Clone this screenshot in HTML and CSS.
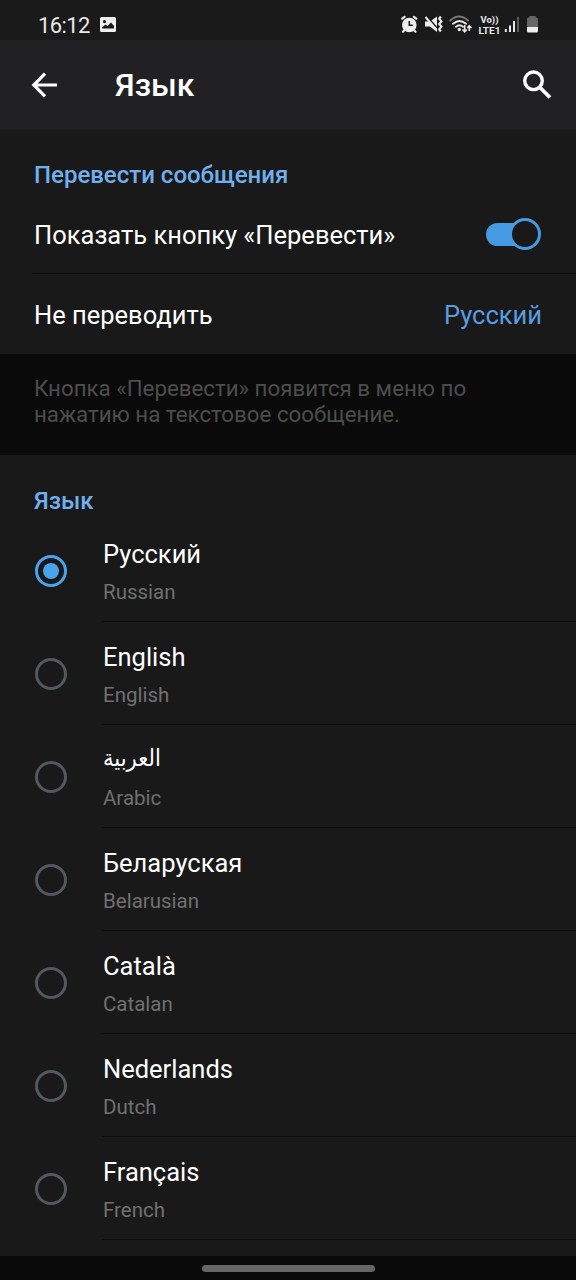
FILE: index.html
```html
<!DOCTYPE html>
<html lang="ru">
<head>
<meta charset="utf-8">
<title>Язык</title>
<link rel="stylesheet" href="styles.css">
</head>
<body>
<div class="screen">
  <div class="status">
    <span class="clock">16:12</span>
    <svg class="picture" width="16" height="16" viewBox="0 0 16 16"><path fill="#eee" fill-rule="evenodd" d="M1.500 0h13A1.500 1.500 0 0 1 16 1.500v12a1.500 1.500 0 0 1-1.500 1.500h-13A1.500 1.500 0 0 1 0 13.500v-12A1.500 1.500 0 0 1 1.500 0zM2 11.500h12V9l-3-3.500-3.500 3.500L5.500 7.500 2 10.500zM4.500 3a1.600 1.600 0 1 0 0 3.200 1.600 1.600 0 0 0 0-3.200z"/></svg>
    <svg class="indicators" width="140" height="26" viewBox="400 12 140 26">
      <path d="M402.200 18.700l2.400-1.900M416.300 18.700l-2.400-1.900M404.500 30l-1.500 1.700M414 30l1.500 1.700" fill="none" stroke="#e9e9e9" stroke-width="2.200" stroke-linecap="round"/>
      <circle cx="409.300" cy="25" r="7.300" fill="#ededed"/>
      <path d="M409.300 21v4.300h3.400" fill="none" stroke="#1a1a1a" stroke-width="1.500"/>
      <path fill="#ededed" d="M425 21.500h5l7-5v15.500l-7-5.500h-5z"/>
      <path d="M427 16.500l11.500 13" stroke="#1a1a1a" stroke-width="1.600"/>
      <path d="M425.500 17l11 13" stroke="#ededed" stroke-width="2"/>
      <path d="M440.800 16.500l-1.600 2.300 2.200 2.600-2.200 2.600 2.200 2.600-2.200 2.600 1.600 2.300" fill="none" stroke="#e5e5e5" stroke-width="2.200"/>
      <g fill="none" stroke-width="1.900" stroke-linecap="round">
        <path stroke="#777" d="M450.300 20.500Q459 12.500 468 20.500"/>
        <path stroke="#e5e5e5" d="M453 23.800Q459.500 18 466 23.800M456 26.800Q459.500 23.800 463 26.800"/>
      </g>
      <circle cx="459.300" cy="29.500" r="1.700" fill="#e9e9e9"/>
      <path d="M464.700 25v6.500M462.500 29.500l2.200 2.300 2.200-2.300M469.300 31v-5M467.300 28l2-2.300 2.200 2.300" fill="none" stroke="#e9e9e9" stroke-width="1.600"/>
      <text class="net" x="480.500" y="22.900" textLength="18" lengthAdjust="spacingAndGlyphs">Vo))</text>
      <text class="net" x="478.500" y="33.800" textLength="22" lengthAdjust="spacingAndGlyphs">LTE1</text>
      <path d="M505.800 29v3M510 25.500V32M514 21V32" stroke="#e9e9e9" stroke-width="2"/>
      <path d="M518 17v15" stroke="#5c5c5c" stroke-width="2"/>
      <path fill="#666" d="M529.500 17.500v-1.500h6v1.500h1a1.500 1.500 0 0 1 1.500 1.500v8h-11v-8a1.500 1.500 0 0 1 1.500-1.500z"/>
      <path fill="#eee" d="M527 27h11v4a1.500 1.500 0 0 1-1.500 1.500h-8a1.500 1.500 0 0 1-1.500-1.500z"/>
    </svg>
  </div>
  <header class="bar">
    <svg class="back" width="28" height="28" viewBox="0 0 28 28"><path d="M26 14H3M14 2.700L2.800 14 14 25.300" fill="none" stroke="#fff" stroke-width="3.200"/></svg>
    <h1 class="title">Язык</h1>
    <svg class="search" width="30" height="30" viewBox="0 0 30 30"><circle cx="11.500" cy="10.800" r="8.800" fill="none" stroke="#fff" stroke-width="3.400"/><path d="M17.500 17L28 27.500" stroke="#fff" stroke-width="3.800"/></svg>
  </header>
  <section class="translate">
    <h2 class="heading">Перевести сообщения</h2>
    <div class="option option-toggle"><span class="label-show">Показать кнопку «Перевести»</span><span class="switch"><span class="track"></span><span class="knob"></span></span></div>
    <div class="option option-skip"><span>Не переводить</span><span class="value">Русский</span></div>
  </section>
  <p class="note">Кнопка «Перевести» появится в меню по<br>нажатию на текстовое сообщение.</p>
  <section class="languages">
    <h2 class="heading">Язык</h2>
    <div class="lang"><span class="radio checked"></span><div class="names"><span class="name">Русский</span><span class="sub">Russian</span></div></div>
    <div class="lang"><span class="radio"></span><div class="names"><span class="name">English</span><span class="sub">English</span></div></div>
    <div class="lang"><span class="radio"></span><div class="names"><span class="name arabic" lang="ar">العربية</span><span class="sub">Arabic</span></div></div>
    <div class="lang"><span class="radio"></span><div class="names"><span class="name">Беларуская</span><span class="sub">Belarusian</span></div></div>
    <div class="lang"><span class="radio"></span><div class="names"><span class="name">Català</span><span class="sub">Catalan</span></div></div>
    <div class="lang"><span class="radio"></span><div class="names"><span class="name">Nederlands</span><span class="sub">Dutch</span></div></div>
    <div class="lang"><span class="radio"></span><div class="names"><span class="name">Français</span><span class="sub">French</span></div></div>
  </section>
  <footer class="nav"><span class="pill"></span></footer>
</div>
</body>
</html>
```
FILE: styles.css
```css
* { box-sizing: border-box; }
body { margin: 0; background: #191919; font-family: Roboto, "Noto Sans", sans-serif; color: #fff; }
.screen { width: 576px; height: 1280px; display: flex; flex-direction: column; overflow: hidden; background: #191919; }
.status { height: 40px; flex: none; display: flex; align-items: flex-start; padding-left: 38px; background: #1a1a1a; }
.clock { width: 62px; padding-top: 13px; font-size: 22px; letter-spacing: -0.6px; line-height: 25px; color: #e8e8e8; white-space: nowrap; }
.picture { margin-top: 17px; }
.indicators { margin: 12px 36px 0 auto; }
.net { font: 700 9.300px Roboto, sans-serif; fill: #e9e9e9; }
.bar { height: 90px; flex: none; display: flex; align-items: center; padding: 0 24px 0 31px; background: #212123; border-bottom: 1px solid #1c1c1d; }
.back { margin-right: 56px; }
.title { margin: 0; font-size: 32px; line-height: 36px; font-weight: 500; }
.search { margin-left: auto; }
.translate { height: 224px; flex: none; padding-top: 30px; }
.heading { margin: 0; padding-left: 34px; font-size: 24px; line-height: 30px; font-weight: 500; color: #71b0ef; }
.option { display: flex; justify-content: space-between; align-items: center; margin-left: 32px; padding: 0 34px 0 2px; font-size: 25.500px; }
.option-toggle { height: 84px; padding-top: 5px; padding-right: 35px; border-bottom: 1px solid #0c0c0c; }
.label-show { padding-top: 2px; }
.option-skip { height: 80px; padding-top: 2px; }
.value { color: #5a9ce0; }
.switch { width: 55px; height: 32px; display: grid; align-items: center; }
.switch > * { grid-area: 1 / 1; }
.track { width: 44px; height: 23px; border-radius: 12px; background: #469ae2; }
.knob { justify-self: end; width: 32px; height: 32px; border: 3px solid #469ae2; border-radius: 50%; background: #191919; }
.note { margin: 0; height: 101px; flex: none; padding: 21px 34px 0; font-size: 22.300px; line-height: 26px; color: #4d4d4d; background: #0a0a0a; }
.languages { height: 801px; flex: none; padding-top: 31px; overflow: hidden; }
.languages .heading { height: 33px; }
.lang { height: 103px; display: flex; align-items: center; padding-left: 35px; }
.radio { width: 32px; height: 32px; flex: none; margin-right: 35px; border: 3px solid #535860; border-radius: 50%; }
.checked { display: grid; place-items: center; border-color: #4ba3ec; }
.checked::after { content: ""; width: 16px; height: 16px; border-radius: 50%; background: #4ba3ec; }
.names { flex: 1; height: 103px; display: flex; flex-direction: column; padding: 19px 0 0 1px; border-bottom: 1px solid #0c0c0c; }
.name { height: 39px; font-size: 25.500px; line-height: 32px; }
.arabic { font-family: "DejaVu Sans Condensed", "DejaVu Sans", sans-serif; font-stretch: condensed; font-size: 23.500px; line-height: 28px; }
.sub { font-size: 20.500px; line-height: 30px; color: #707070; }
.nav { height: 24px; flex: none; display: flex; justify-content: center; align-items: center; background: #0a0a0a; }
.pill { width: 173px; height: 7px; border-radius: 4px; background: #666; }
```
